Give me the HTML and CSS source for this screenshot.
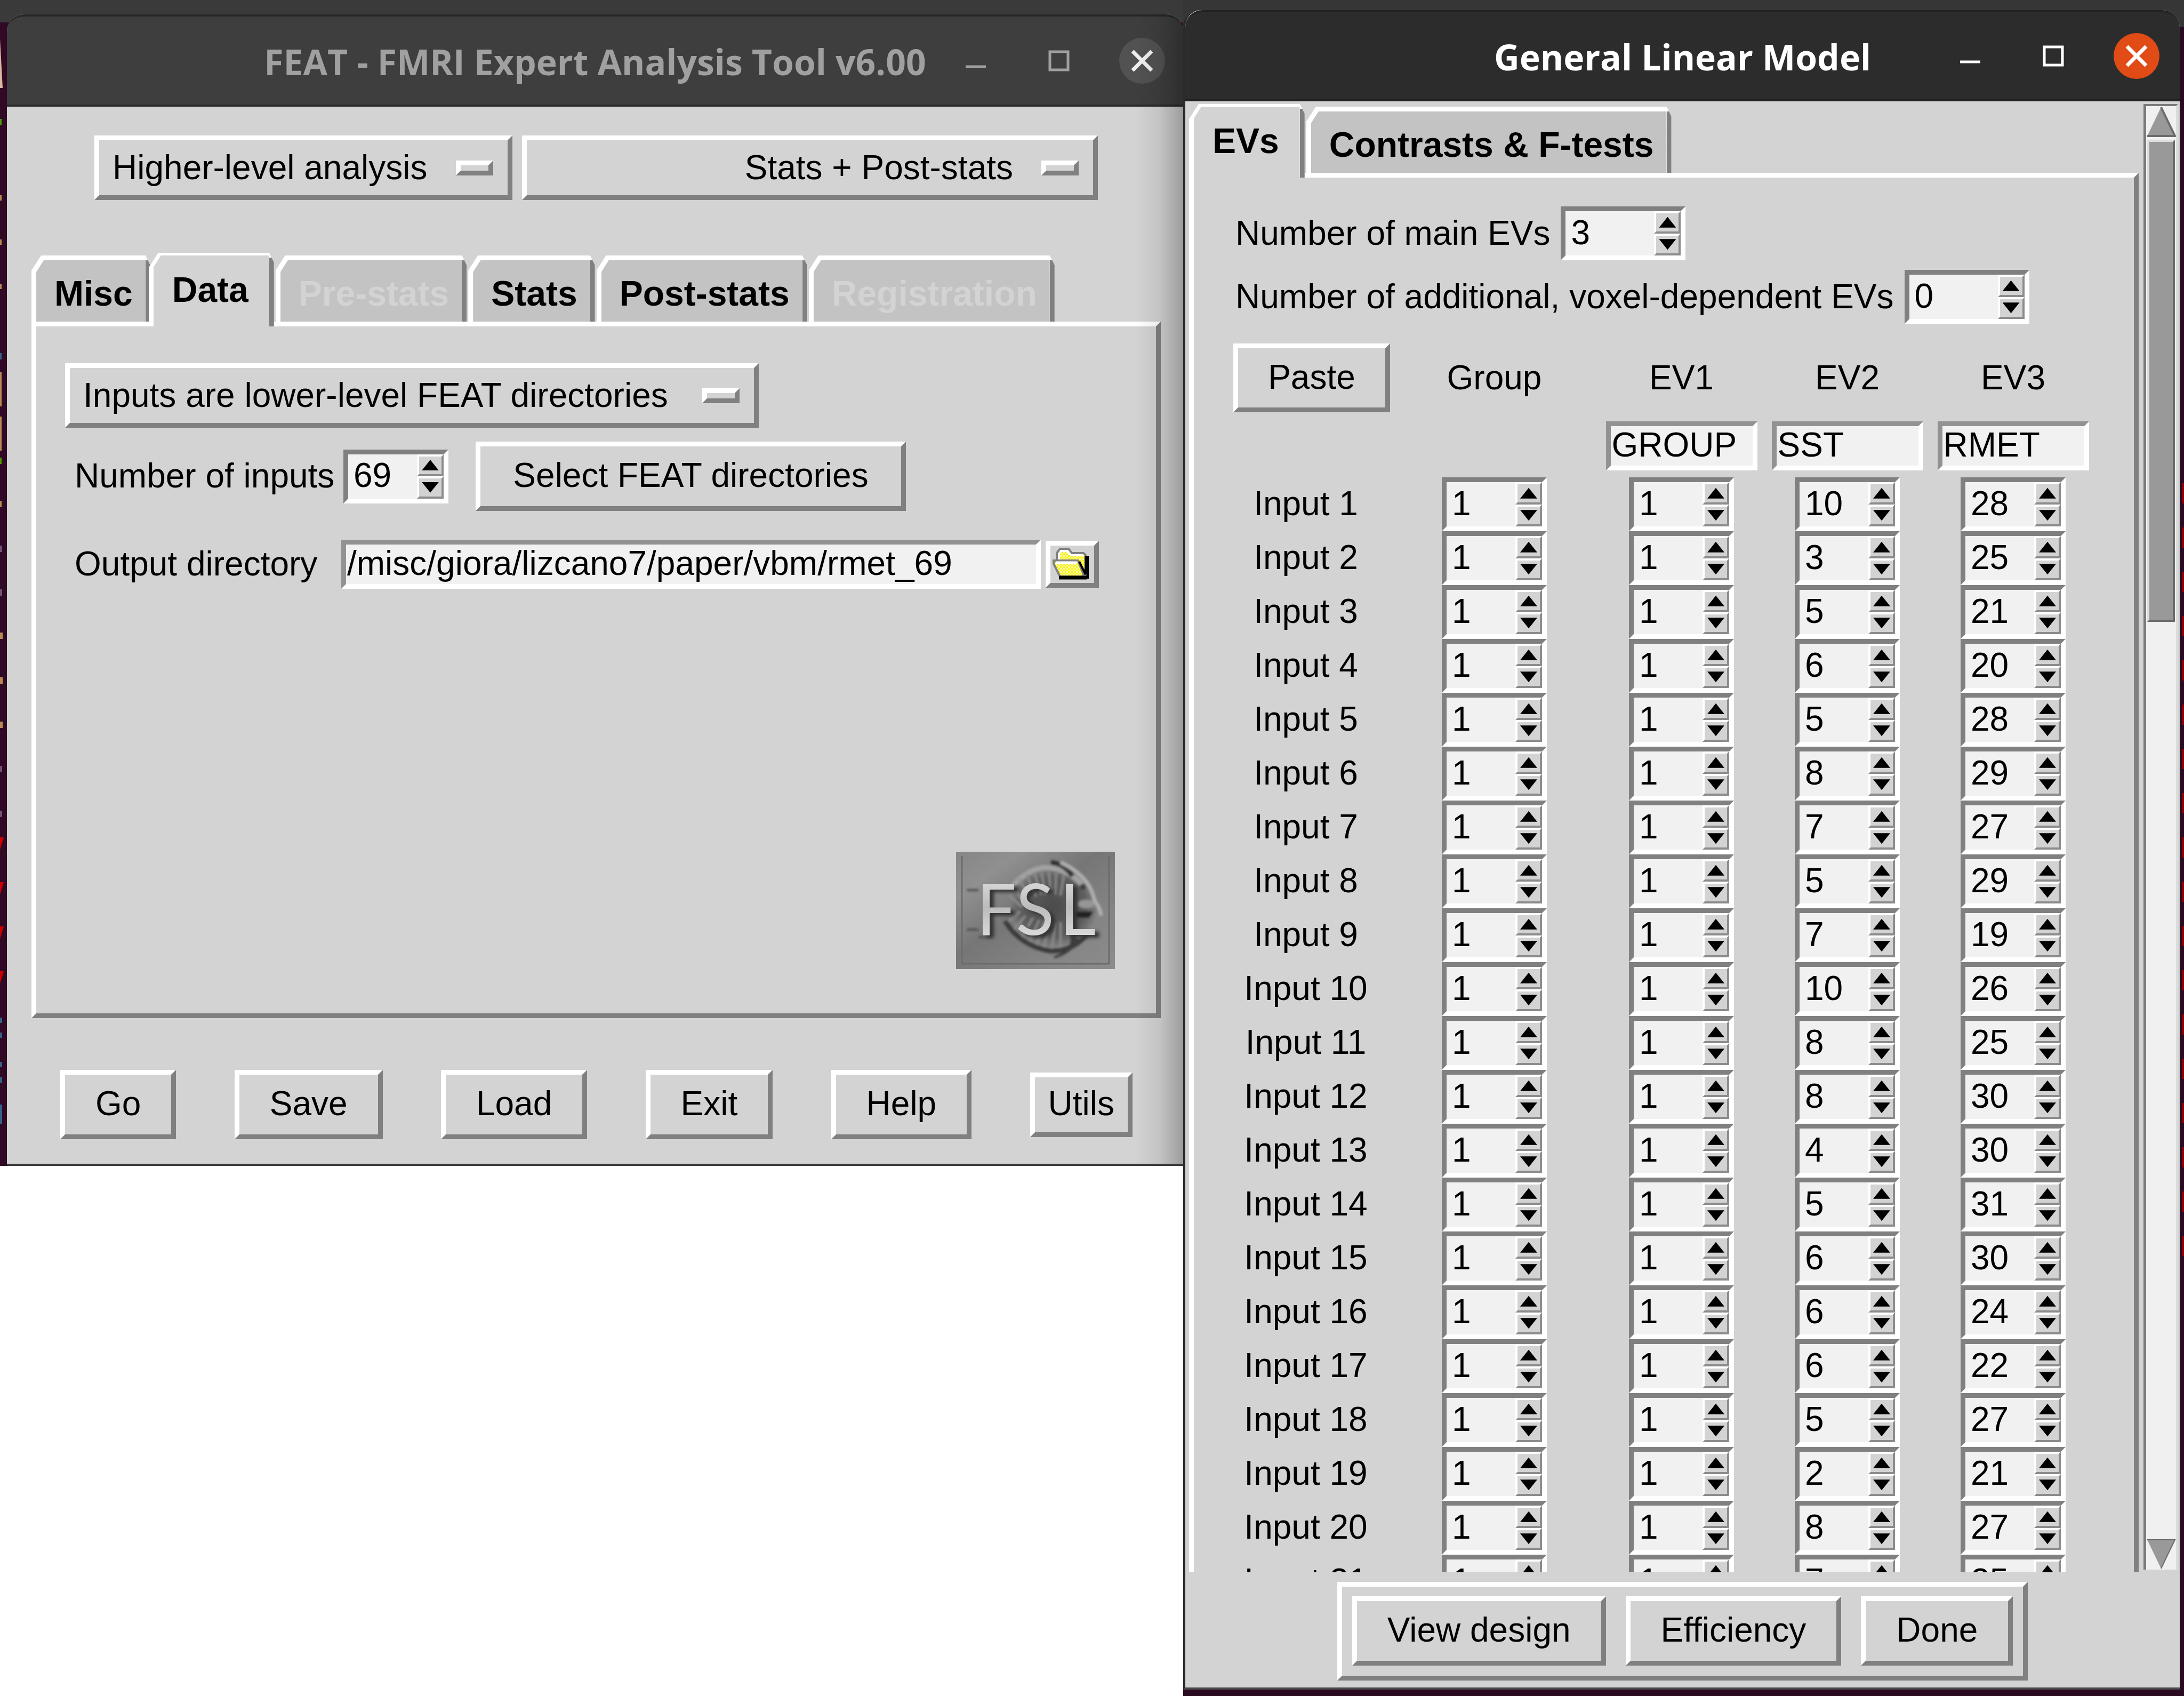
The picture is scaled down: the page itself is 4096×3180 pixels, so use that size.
FILE: index.html
```html
<!DOCTYPE html>
<html lang="en">
<head>
<meta charset="utf-8">
<title>FEAT - General Linear Model</title>
<link rel="stylesheet" href="styles.css">
</head>
<body>
<div class="desktop">
  <div class="left-side">
    <div class="backdrop">
      <svg class="terminal-specks" width="7" height="2157" aria-hidden="true">
        <path d="M0 40L5 132H0Z" fill="#d9b8a0"/>
        <g fill="#4e9a06"><rect y="190" width="3" height="12"/><rect y="825" width="3" height="12"/></g>
        <g fill="#b98a55"><rect y="333" width="3" height="10"/><rect y="416" width="3" height="10"/><rect y="499" width="3" height="10"/><rect y="665" width="3" height="64"/><rect y="748" width="3" height="64"/><rect y="906" width="3" height="12"/><rect y="1153" width="5" height="12"/><rect y="1237" width="5" height="12"/><rect y="1320" width="5" height="12"/></g>
        <g fill="#75507b"><rect y="990" width="4" height="12"/><rect y="1072" width="4" height="12"/><rect y="1403" width="4" height="12"/><rect y="1487" width="4" height="12"/></g>
        <g fill="#cc0000"><path d="M0 1537H7L0 1560Z"/><path d="M0 1621H7L0 1644Z"/><path d="M0 1704H7L0 1727Z"/><path d="M0 1788H7L0 1811Z"/></g>
        <g fill="#34628a"><rect y="629" width="3" height="12"/><rect y="1875" width="4" height="10"/><rect y="1903" width="4" height="10"/><rect y="1958" width="4" height="10"/><rect y="1987" width="4" height="10"/><rect y="2038" width="4" height="36"/></g>
      </svg>
      <main class="window feat">
        <header class="titlebar">
          <h1 class="title">FEAT - FMRI Expert Analysis Tool v6.00</h1>
          <div class="controls">
            <button class="control" aria-label="Minimize"><svg viewBox="0 0 86 86"><path d="M24 54H62" /></svg></button>
            <button class="control" aria-label="Maximize"><svg viewBox="0 0 86 86"><rect x="26" y="26" width="34" height="34"/></svg></button>
            <button class="control close" aria-label="Close"><svg viewBox="0 0 86 86"><path d="M25 25L61 61M61 25L25 61"/></svg></button>
          </div>
        </header>
        <div class="feat-body">
          <div class="mode-row">
            <span class="option analysis-level"><select aria-label="Analysis level"><option>Higher-level analysis</option></select></span>
            <span class="option stage"><select aria-label="Stages to run"><option>Stats + Post-stats</option></select></span>
          </div>
          <div class="tabs" role="tablist">
            <button class="tab" role="tab">Misc</button>
            <button class="tab active" role="tab" aria-selected="true">Data</button>
            <button class="tab" role="tab" disabled>Pre-stats</button>
            <button class="tab" role="tab">Stats</button>
            <button class="tab" role="tab">Post-stats</button>
            <button class="tab" role="tab" disabled>Registration</button>
          </div>
          <section class="panel data-panel" role="tabpanel">
            <span class="option input-type"><select aria-label="Input type"><option>Inputs are lower-level FEAT directories</option></select></span>
            <div class="field-row inputs-row">
              <label class="field-label" for="n-inputs">Number of inputs</label>
              <span class="spin"><input id="n-inputs" type="number" value="69"><span class="steps"><button class="step up" aria-label="Increase"></button><button class="step down" aria-label="Decrease"></button></span></span>
              <button class="btn select-dirs">Select FEAT directories</button>
            </div>
            <div class="field-row output-row">
              <label class="field-label" for="outdir">Output directory</label>
              <input class="entry" id="outdir" type="text" value="/misc/giora/lizcano7/paper/vbm/rmet_69">
              <button class="btn folder" aria-label="Browse">
                <svg viewBox="0 0 82 70">
                  <defs><pattern id="dots" width="6" height="6" patternUnits="userSpaceOnUse"><rect width="6" height="6" fill="#f4f000"/><rect width="3" height="3" fill="#fffbb0"/><rect x="3" y="3" width="3" height="3" fill="#fffbb0"/></pattern></defs>
                  <path d="M18 58V62H72V20H66V58Z" fill="#000"/>
                  <path d="M12 28V14L18 6H34L40 14H62L66 18V54H16Z" fill="url(#dots)" stroke="#808080" stroke-width="4"/>
                  <path d="M16 26V16L20 10H32L38 18H62" fill="none" stroke="#fff" stroke-width="4"/>
                  <path d="M6 28H52L62 54V58H18L6 34Z" fill="url(#dots)" stroke="#808080" stroke-width="4"/>
                  <path d="M10 32H50" stroke="#fff" stroke-width="5"/>
                  <path d="M54 30L66 54V20" fill="none" stroke="#000" stroke-width="4"/>
                  <path d="M16 60H68" stroke="#000" stroke-width="7"/>
                </svg>
              </button>
            </div>
            <svg class="fsl-logo" viewBox="0 0 298 220" role="img" aria-label="FSL logo">
              <defs>
                <linearGradient id="stone" x1="0" y1="0" x2="1" y2="1"><stop offset="0" stop-color="#868686"/><stop offset=".2" stop-color="#909090"/><stop offset=".45" stop-color="#767676"/><stop offset=".75" stop-color="#858585"/><stop offset="1" stop-color="#8c8c8c"/></linearGradient>
                <radialGradient id="body"><stop offset="0" stop-color="#4c4c4c"/><stop offset=".75" stop-color="#5c5c5c"/><stop offset="1" stop-color="#808080"/></radialGradient>
                <linearGradient id="metal" x1="0" y1="0" x2="0" y2="1"><stop offset="0" stop-color="#e8e8e8"/><stop offset=".5" stop-color="#bcbcbc"/><stop offset="1" stop-color="#e8e8e8"/></linearGradient>
                <filter id="soft"><feGaussianBlur stdDeviation="2"/></filter>
              </defs>
              <rect width="298" height="220" fill="url(#stone)"/>
              <path d="M11 8V210H287V8" fill="none" stroke="#6c6c6c" stroke-width="3"/>
              <g filter="url(#soft)">
                <ellipse cx="182" cy="104" rx="82" ry="74" fill="url(#body)"/>
                <path d="M104 66Q140 26 176 30T236 62" fill="none" stroke="#a2a2a2" stroke-width="10"/>
                <path d="M104 60L128 96M118 50L140 90M132 42L150 84M146 38L160 80M160 38L168 80M174 38L178 80M188 40L186 80M202 44L196 82M106 150L130 120M122 164L144 124M136 172L156 128M150 178L166 130M164 182L176 132M180 182L186 134M196 180L196 132M98 80L124 104M94 134L120 112" stroke="#8c8c8c" stroke-width="4"/>
                <path d="M92 130Q120 176 176 186Q220 188 250 150" fill="none" stroke="#3a3a3a" stroke-width="9"/>
                <path d="M178 20Q206 24 218 46" fill="none" stroke="#333" stroke-width="9"/>
                <path d="M196 20Q250 44 260 92Q270 104 272 120" fill="none" stroke="#b0b0b0" stroke-width="7"/>
                <path d="M216 156Q222 184 184 198Q210 192 230 166Z" fill="#3c3c3c" stroke="#3c3c3c" stroke-width="4"/>
                <circle cx="238" cy="66" r="6" fill="#404040"/>
                <ellipse cx="244" cy="98" rx="16" ry="8" fill="#969696"/>
                <path d="M222 112H258L250 124H220Z" fill="#222"/>
                <path d="M20 72H42M20 146H42M42 160H66" stroke="#505050" stroke-width="4"/>
              </g>
              <g class="logo-letters"><text x="38" y="156">F</text><text x="112" y="156">S</text><text x="194" y="156">L</text></g>
            </svg>
          </section>
          <div class="actions">
            <button class="btn">Go</button>
            <button class="btn">Save</button>
            <button class="btn">Load</button>
            <button class="btn">Exit</button>
            <button class="btn">Help</button>
            <button class="btn compact">Utils</button>
          </div>
        </div>
      </main>
    </div>
  </div>

  <div class="right-side">
    <section class="window glm" aria-labelledby="glm-title">
      <header class="titlebar focused">
        <h1 class="title" id="glm-title">General Linear Model</h1>
        <div class="controls">
          <button class="control" aria-label="Minimize"><svg viewBox="0 0 86 86"><path d="M24 54H62"/></svg></button>
          <button class="control" aria-label="Maximize"><svg viewBox="0 0 86 86"><rect x="26" y="26" width="34" height="34"/></svg></button>
          <button class="control close" aria-label="Close"><svg viewBox="0 0 86 86"><path d="M25 25L61 61M61 25L25 61"/></svg></button>
        </div>
      </header>
      <div class="glm-view">
        <div class="glm-scroll">
          <div class="tabs" role="tablist">
            <button class="tab active" role="tab" aria-selected="true">EVs</button>
            <button class="tab" role="tab">Contrasts &amp; F-tests</button>
          </div>
          <div class="panel ev-panel" role="tabpanel">
            <div class="field-row ev-count">
              <label for="main-evs">Number of main EVs</label>
              <span class="spin wide"><input id="main-evs" type="number" value="3"><span class="steps"><button class="step up" aria-label="Increase"></button><button class="step down" aria-label="Decrease"></button></span></span>
            </div>
            <div class="field-row ev-count">
              <label for="vox-evs">Number of additional, voxel-dependent EVs</label>
              <span class="spin wide"><input id="vox-evs" type="number" value="0"><span class="steps"><button class="step up" aria-label="Increase"></button><button class="step down" aria-label="Decrease"></button></span></span>
            </div>
            <table class="design">
              <colgroup><col class="col-input"><col class="col-group"><col class="col-ev"><col class="col-ev"><col class="col-ev"></colgroup>
              <thead>
                <tr class="heads"><td><button class="btn paste">Paste</button></td><th>Group</th><th>EV1</th><th>EV2</th><th>EV3</th></tr>
                <tr class="names"><td></td><td></td>
                  <td><input class="entry" type="text" aria-label="EV1 name" value="GROUP"></td>
                  <td><input class="entry" type="text" aria-label="EV2 name" value="SST"></td>
                  <td><input class="entry" type="text" aria-label="EV3 name" value="RMET"></td></tr>
              </thead>
              <tbody id="design-rows"></tbody>
            </table>
          </div>
        </div>
        <div class="scrollbar">
          <button class="arrow" aria-label="Scroll up"><svg viewBox="0 0 56 60"><path d="M28 2L54 56H2Z" fill="#999"/><path d="M28 2L54 56H2" fill="none" stroke="#6b6b6b" stroke-width="4"/></svg></button>
          <div class="track"><div class="thumb"></div></div>
          <button class="arrow" aria-label="Scroll down"><svg viewBox="0 0 56 60"><path d="M2 4H54L28 58Z" fill="#999"/><path d="M2 4H54L28 58" fill="none" stroke="#6b6b6b" stroke-width="2"/></svg></button>
        </div>
      </div>
      <footer class="glm-footer">
        <div class="button-frame">
          <button class="btn">View design</button>
          <button class="btn">Efficiency</button>
          <button class="btn">Done</button>
        </div>
      </footer>
    </section>
  </div>
</div>
<script src="design.js"></script>
</body>
</html>
```
FILE: styles.css
```css
*, *::before, *::after { box-sizing: border-box; }

:root {
  --face: #d3d3d3;
  --light: #fff;
  --dark: #808080;
  --field: #f1f1f1;
  --bevel: 9px;
}

body {
  margin: 0;
  background: #fff;
  color: #000;
  font: 64px/72px "Liberation Sans", Arial, sans-serif;
}

button, input, select {
  margin: 0;
  padding: 0;
  border: 0;
  border-radius: 0;
  color: inherit;
  font: inherit;
  appearance: none;
}

.desktop {
  display: grid;
  grid-template-columns: minmax(0, 2219fr) minmax(0, 1877fr);
  grid-template-rows: minmax(0, 1fr);
  height: 100vh;
}

.backdrop {
  position: relative;
  padding: 27px 0 0 13px;
  background: linear-gradient(#3a3a3a 42px, #300a24 42px);
}

.terminal-specks {
  position: absolute;
  left: 0;
  top: 33px;
}

.right-side {
  padding: 19px 8px 12px 0;
  background:
    repeating-linear-gradient(#8e0000 0 38px, transparent 38px 83px) right 906px / 4px 1449px no-repeat,
    linear-gradient(#363636 50px, #2a0a20 50px);
}

/* Windows */
.window { position: relative; background: var(--face); }

.feat { border-bottom: 4px solid #3a3a3a; border-radius: 32px 32px 0 0; }

.feat::after {
  content: "";
  position: absolute;
  inset: 0 0 0 auto;
  width: 90px;
  border-radius: 0 32px 0 0;
  background: linear-gradient(to right, transparent, rgba(0, 0, 0, .07) 50%, rgba(0, 0, 0, .26));
  pointer-events: none;
}

.glm {
  display: flex;
  flex-direction: column;
  height: 100%;
  border-left: 4px solid #2a2a2a;
  border-bottom: 4px solid #4a4a4a;
  border-radius: 32px 32px 0 0;
}

.titlebar {
  display: grid;
  grid-template-columns: 1fr auto 1fr;
  align-items: center;
  height: 173px;
  padding: 0 34px;
  border-top: 4px solid #282828;
  border-bottom: 4px solid #2c2c2c;
  border-radius: 32px 32px 0 0;
  background: #3e3e3e;
  color: #a0a0a0;
}

.titlebar.focused { height: 171px; padding: 0 38px; border-color: #222; background: #2c2c2c; color: #fff; }

.title {
  grid-column: 2;
  margin: 0;
  padding-top: 2px;
  font: bold 66px/80px "Open Sans", "Noto Sans", sans-serif;
  white-space: nowrap;
}

.controls { display: flex; justify-content: flex-end; gap: 70px; }
.control { width: 86px; height: 86px; border-radius: 50%; background: none; }
.control svg { display: block; fill: none; stroke: currentColor; stroke-width: 5px; }
.control.close { background: #525252; color: #f0f0f0; }
.focused .control.close { background: #e04b16; color: #fff; }
.control.close svg { stroke-width: 7px; }

/* Raised and sunken controls */
.btn, .option select, .button-frame {
  border: var(--bevel) solid;
  border-color: var(--light) var(--dark) var(--dark) var(--light);
  background: var(--face);
}

.btn { height: 130px; padding: 0 57px 4px; white-space: nowrap; }
.btn.compact { height: 121px; padding: 0 25px 4px; }

.option { display: block; position: relative; height: 121px; }
.option select { display: block; width: 100%; height: 100%; padding: 0 150px 2px 25px; }
.option::after {
  content: "";
  position: absolute;
  right: 36px;
  top: 47px;
  width: 70px;
  height: 28px;
  border: var(--bevel) solid;
  border-color: var(--light) var(--dark) var(--dark) var(--light);
  pointer-events: none;
}

.entry {
  height: 92px;
  padding: 0 2px 4px;
  border: var(--bevel) solid;
  border-color: #929292 var(--light) var(--light) #929292;
  background: var(--field);
}

.spin {
  display: flex;
  width: 197px;
  height: 101px;
  border: var(--bevel) solid;
  border-color: var(--dark) var(--light) var(--light) var(--dark);
  background: var(--field);
}
.spin.wide { width: 234px; }
.spin input { flex: 1; width: 0; padding: 0 0 4px 10px; background: none; appearance: textfield; }
.spin input::-webkit-inner-spin-button { appearance: none; margin: 0; }
.steps { display: flex; flex-direction: column; width: 50px; }
.step {
  display: grid;
  place-items: center;
  flex: 1;
  border: 4px solid;
  border-color: var(--light) #8c8c8c #8c8c8c var(--light);
  background: var(--face);
}
.step::before {
  content: "";
  width: 32px;
  height: 20px;
  background: #000;
}
.step.up::before { clip-path: polygon(50% 0, 100% 100%, 0 100%); }
.step.down::before { clip-path: polygon(0 0, 100% 0, 50% 100%); }

/* Tabs */
.tabs { display: flex; align-items: flex-end; gap: 3px; }

.tab {
  position: relative;
  isolation: isolate;
  height: 124px;
  padding: 18px 33px 0 43px;
  font-weight: bold;
  font-size: 66px;
  white-space: nowrap;
  background: linear-gradient(var(--dark), var(--dark)) right bottom / 9px calc(100% - 9px) no-repeat, var(--light);
  clip-path: polygon(0 28px, 18px 0, calc(100% - 9px) 0, 100% 18px, 100% 100%, 0 100%);
}
.tab::before {
  content: "";
  position: absolute;
  z-index: -1;
  inset: 9px 9px 0;
  background: #c3c3c3;
  clip-path: polygon(0 22px, 14px 0, 100% 0, 100% 100%, 0 100%);
}
.tab:disabled { color: #d3d3d3; }

.tab.active {
  z-index: 1;
  height: 138px;
  margin-bottom: -9px;
  padding: 0 48px 0 44px;
}
.tab.active::before { top: 5px; background: var(--face); }
.tab:has(+ .active) { margin-right: -6px; }

.panel {
  border: var(--bevel) solid;
  border-color: var(--light) var(--dark) var(--dark) var(--light);
}

.field-row { display: flex; align-items: center; }

/* FEAT window */
.feat-body { padding: 54px 42px 46px 46px; }
.mode-row { display: flex; gap: 18px; margin: 0 118px 99px; }
.analysis-level { width: 784px; }
.stage { flex: 1; }
.stage select { text-align: right; text-align-last: right; }

.data-panel { padding: 69px 77px 83px 54px; }
.input-type { width: 1301px; }
.field-label { width: 522px; padding: 0 0 2px 18px; white-space: nowrap; }
.inputs-row { margin-top: 26px; }
.select-dirs { width: 807px; margin-left: 51px; }
.output-row { gap: 9px; margin: 54px 30px 0 0; }
.output-row .field-label { width: 509px; }
.output-row .entry { flex: 1; min-width: 0; }
.btn.folder { width: 100px; height: 88px; padding: 0; }
.folder svg { display: block; width: 82px; height: 70px; }

.fsl-logo { display: block; width: 298px; height: 220px; margin: 493px 0 0 auto; }
.fsl-logo text { font: 133px Lato, "Liberation Sans", sans-serif; }
.logo-letters { fill: url(#metal); filter: drop-shadow(8px 5px 3px #333); }

.actions { display: flex; align-items: center; justify-content: space-between; margin: 97px 53px 0 54px; }

/* General Linear Model window */
.glm-view { display: flex; flex: 1; gap: 9px; min-height: 0; padding: 5px 3px 0 7px; }
.glm-scroll { flex: 1; min-width: 0; overflow: hidden; }
.ev-panel { padding: 54px 0 0 74px; }
.ev-count { gap: 20px; margin-bottom: 18px; }
.ev-count label { padding: 0 0 2px 4px; white-space: nowrap; }

.design { margin-top: 37px; border-collapse: collapse; table-layout: fixed; width: 1618px; }
.col-input { width: 294px; }
.col-group { width: 391px; }
.col-ev { width: 311px; }
.design td, .design th { padding: 0; font-weight: normal; text-align: center; }
.design thead th { padding-bottom: 2px; }
.design tbody th { padding: 0 22px 4px 0; white-space: nowrap; }
.design .paste { display: block; width: 100%; height: 129px; padding: 0 0 4px; }
.names td { height: 122px; }
.names .entry { display: block; width: 284px; margin: 4px auto 0; }
.design .spin { margin: 0 auto; }

.scrollbar {
  display: flex;
  flex-direction: column;
  width: 65px;
  margin-bottom: 5px;
  border-left: 5px solid #7a7a7a;
  border-top: 4px solid #7a7a7a;
  border-right: 4px solid #dcdcdc;
  background: #f0f0f0;
}
.arrow { height: 60px; background: none; }
.arrow svg { display: block; width: 56px; height: 60px; }
.track { flex: 1; padding: 3px 2px 0; }
.thumb {
  height: 34.5%;
  border: 4px solid;
  border-color: #ddd #6b6b6b #6b6b6b #ddd;
  background: #999;
}

.glm-footer { display: flex; justify-content: center; padding: 18px 0 13px; }
.button-frame { display: flex; gap: 37px; padding: 18px 19px 19px; }
```
FILE: design.js
```js
// One row per lower-level input: group, EV1, EV2, EV3.
const design = [
  [1, 1, 10, 28], [1, 1, 3, 25], [1, 1, 5, 21], [1, 1, 6, 20], [1, 1, 5, 28],
  [1, 1, 8, 29], [1, 1, 7, 27], [1, 1, 5, 29], [1, 1, 7, 19], [1, 1, 10, 26],
  [1, 1, 8, 25], [1, 1, 8, 30], [1, 1, 4, 30], [1, 1, 5, 31], [1, 1, 6, 30],
  [1, 1, 6, 24], [1, 1, 6, 22], [1, 1, 5, 27], [1, 1, 2, 21], [1, 1, 8, 27],
  [1, 1, 7, 25]
];
const columns = ["Group", "EV1", "EV2", "EV3"];

document.getElementById("design-rows").innerHTML = design.map((row, i) => `
  <tr><th scope="row">Input ${i + 1}</th>${row.map((value, c) => `
    <td><span class="spin"><input type="number" aria-label="${columns[c]}, input ${i + 1}" value="${value}"><span class="steps"><button class="step up" aria-label="Increase"></button><button class="step down" aria-label="Decrease"></button></span></span></td>`).join("")}
  </tr>`).join("");
```
